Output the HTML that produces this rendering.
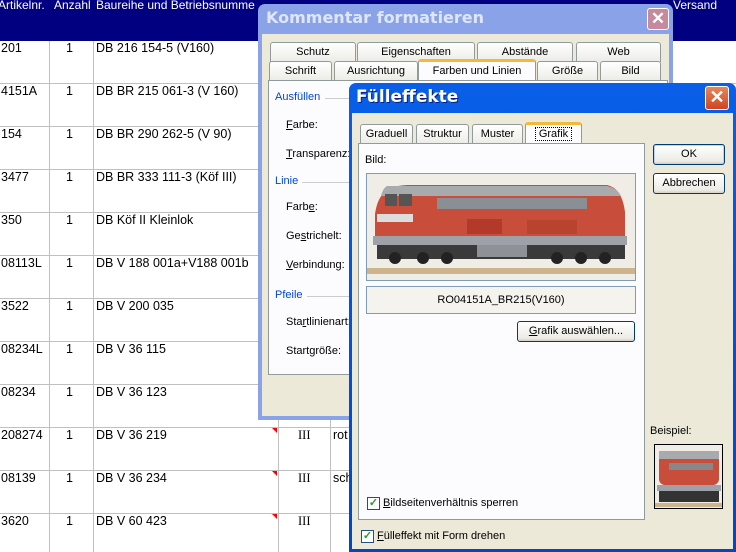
<!DOCTYPE html>
<html><head><meta charset="utf-8"><style>
*{margin:0;padding:0;box-sizing:border-box}
body{width:736px;height:552px;overflow:hidden;position:relative;background:#fff;font-family:"Liberation Sans",sans-serif;font-size:11px;color:#000}
.a{position:absolute;white-space:nowrap}
.hd{position:absolute;left:0;top:0;width:736px;height:41px;background:#000080;color:#fff;font-size:12px}
.hl{position:absolute;left:0;width:736px;height:1px;background:#c0c0c0}
.vl{position:absolute;top:41px;height:511px;width:1px;background:#c0c0c0}
.cell{position:absolute;font-size:12.5px;font-family:"Liberation Sans",sans-serif}
.tab{position:absolute;height:20px;border:1px solid #919b9c;border-bottom:none;border-radius:3px 3px 0 0;background:linear-gradient(#fff,#ecebe6);text-align:center;line-height:18px;font-size:11px}
.btn{position:absolute;border:1px solid #003c74;border-radius:3px;background:linear-gradient(#fff,#ecebe6 85%,#d6d0c5);text-align:center;font-size:11px}
.cb{position:absolute;width:13px;height:13px;border:1px solid #1c5180;background:#fff;color:#21a121;font-size:11px;line-height:11px;text-align:center;font-weight:bold}
</style></head><body>
<div class="hd">
<span class="a" style="left:-2px;top:-2px">Artikelnr.</span>
<span class="a" style="left:54px;top:-2px">Anzahl</span>
<span class="a" style="left:96px;top:-2px">Baureihe und Betriebsnumme</span>
<span class="a" style="left:673px;top:-2px">Versand</span>
</div>
<div class="hl" style="top:83px"></div><div class="hl" style="top:126px"></div><div class="hl" style="top:169px"></div><div class="hl" style="top:212px"></div><div class="hl" style="top:255px"></div><div class="hl" style="top:298px"></div><div class="hl" style="top:341px"></div><div class="hl" style="top:384px"></div><div class="hl" style="top:427px"></div><div class="hl" style="top:470px"></div><div class="hl" style="top:513px"></div>
<div class="vl" style="left:49px"></div><div class="vl" style="left:93px"></div><div class="vl" style="left:278px"></div><div class="vl" style="left:330px"></div>
<div class="cell" style="left:1px;top:41px">201</div><div class="cell" style="left:66px;top:41px">1</div><div class="cell" style="left:96px;top:41px">DB 216 154-5 (V160)</div>
<div class="cell" style="left:1px;top:84px">4151A</div><div class="cell" style="left:66px;top:84px">1</div><div class="cell" style="left:96px;top:84px">DB BR 215 061-3 (V 160)</div>
<div class="cell" style="left:1px;top:127px">154</div><div class="cell" style="left:66px;top:127px">1</div><div class="cell" style="left:96px;top:127px">DB BR 290 262-5 (V 90)</div>
<div class="cell" style="left:1px;top:170px">3477</div><div class="cell" style="left:66px;top:170px">1</div><div class="cell" style="left:96px;top:170px">DB BR 333 111-3 (Köf III)</div>
<div class="cell" style="left:1px;top:213px">350</div><div class="cell" style="left:66px;top:213px">1</div><div class="cell" style="left:96px;top:213px">DB Köf II Kleinlok</div>
<div class="cell" style="left:1px;top:256px">08113L</div><div class="cell" style="left:66px;top:256px">1</div><div class="cell" style="left:96px;top:256px">DB V 188 001a+V188 001b</div>
<div class="cell" style="left:1px;top:299px">3522</div><div class="cell" style="left:66px;top:299px">1</div><div class="cell" style="left:96px;top:299px">DB V 200 035</div>
<div class="cell" style="left:1px;top:342px">08234L</div><div class="cell" style="left:66px;top:342px">1</div><div class="cell" style="left:96px;top:342px">DB V 36 115</div>
<div class="cell" style="left:1px;top:385px">08234</div><div class="cell" style="left:66px;top:385px">1</div><div class="cell" style="left:96px;top:385px">DB V 36 123</div>
<div class="cell" style="left:1px;top:428px">208274</div><div class="cell" style="left:66px;top:428px">1</div><div class="cell" style="left:96px;top:428px">DB V 36 219</div><div class="cell" style="left:298px;top:428px;font-family:'Liberation Serif',serif">III</div><div class="cell" style="left:333px;top:428px">rot</div>
<div class="cell" style="left:1px;top:471px">08139</div><div class="cell" style="left:66px;top:471px">1</div><div class="cell" style="left:96px;top:471px">DB V 36 234</div><div class="cell" style="left:298px;top:471px;font-family:'Liberation Serif',serif">III</div><div class="cell" style="left:333px;top:471px">sch</div>
<div class="cell" style="left:1px;top:514px">3620</div><div class="cell" style="left:66px;top:514px">1</div><div class="cell" style="left:96px;top:514px">DB V 60 423</div><div class="cell" style="left:298px;top:514px;font-family:'Liberation Serif',serif">III</div>
<svg class="a" style="left:270px;top:427px" width="8" height="100"><polygon points="2,1 7,1 7,6" fill="red"/><polygon points="2,44 7,44 7,49" fill="red"/><polygon points="2,87 7,87 7,92" fill="red"/></svg>

<!-- Kommentar formatieren -->
<div class="a" style="left:258px;top:4px;width:415px;height:416px;background:#8aa3e8;border-radius:7px 7px 0 0">
 <div class="a" style="left:8px;top:4px;color:#dfe6fb;font-size:16px;font-weight:bold;font-family:'DejaVu Sans',sans-serif">Kommentar formatieren</div>
 <div class="a" style="left:389px;top:4px;width:22px;height:22px;border:1px solid #fff;border-radius:3px;background:#c58a9e;color:#fff;font-size:17px;line-height:19px;text-align:center;font-weight:bold">✕</div>
 <div class="a" style="left:4px;top:30px;width:407px;height:382px;background:#ece9d8"></div>
</div>
<div class="tab" style="left:270px;top:42px;width:86px">Schutz</div>
<div class="tab" style="left:357px;top:42px;width:118px">Eigenschaften</div>
<div class="tab" style="left:477px;top:42px;width:96px">Abstände</div>
<div class="tab" style="left:576px;top:42px;width:85px">Web</div>
<div class="tab" style="left:269px;top:61px;width:63px">Schrift</div>
<div class="tab" style="left:334px;top:61px;width:84px">Ausrichtung</div>
<div class="tab" style="left:418px;top:59px;width:118px;height:22px;background:#fcfcfe;border-top:3px solid #f5b83a">Farben und Linien</div>
<div class="tab" style="left:537px;top:61px;width:61px">Größe</div>
<div class="tab" style="left:600px;top:61px;width:61px">Bild</div>
<div class="a" style="left:268px;top:80px;width:400px;height:295px;border:1px solid #919b9c;background:#fcfcfe"></div>
<div class="a" style="left:275px;top:91px;color:#0046d5">Ausfüllen</div><div class="a" style="left:325px;top:98px;width:25px;height:1px;background:#ccc"></div>
<div class="a" style="left:286px;top:119px"><u>F</u>arbe:</div>
<div class="a" style="left:286px;top:148px"><u>T</u>ransparenz:</div>
<div class="a" style="left:275px;top:175px;color:#0046d5">Linie</div><div class="a" style="left:302px;top:182px;width:48px;height:1px;background:#ccc"></div>
<div class="a" style="left:286px;top:201px">Farb<u>e</u>:</div>
<div class="a" style="left:286px;top:230px">Ge<u>s</u>trichelt:</div>
<div class="a" style="left:286px;top:259px"><u>V</u>erbindung:</div>
<div class="a" style="left:275px;top:289px;color:#0046d5">Pfeile</div><div class="a" style="left:307px;top:296px;width:43px;height:1px;background:#ccc"></div>
<div class="a" style="left:286px;top:316px">Sta<u>r</u>tlinienart:</div>
<div class="a" style="left:286px;top:345px">Start<u>g</u>röße:</div>

<!-- Fülleffekte -->
<div class="a" style="left:349px;top:83px;width:387px;height:469px;background:linear-gradient(#0a5fe8,#0054e3 40%,#0047c8);border-radius:7px 7px 0 0">
 <div class="a" style="left:7px;top:4px;color:#fff;font-size:17px;font-weight:bold;font-family:'DejaVu Sans',sans-serif;text-shadow:1px 1px #0a1e7a">Fülleffekte</div>
 <div class="a" style="left:356px;top:3px;width:24px;height:24px;border:1px solid #fff;border-radius:3px;background:linear-gradient(#e8865e,#cc4620);color:#fff;font-size:18px;line-height:21px;text-align:center;font-weight:bold">✕</div>
 <div class="a" style="left:3px;top:30px;width:381px;height:436px;background:#ece9d8"></div>
</div>
<div class="tab" style="left:360px;top:124px;width:53px">Graduell</div>
<div class="tab" style="left:416px;top:124px;width:53px">Struktur</div>
<div class="tab" style="left:472px;top:124px;width:51px">Muster</div>
<div class="tab" style="left:525px;top:122px;width:57px;height:22px;background:#fcfcfe;border-top:3px solid #f5b83a"><span style="border:1px dotted #000;padding:0 3px">Grafik</span></div>
<div class="a" style="left:358px;top:143px;width:287px;height:377px;border:1px solid #919b9c;background:#fcfcfe"></div>
<div class="a" style="left:365px;top:154px">Bild:</div>
<div class="a" style="left:366px;top:173px;width:270px;height:108px;border:1px solid #7f9db9;background:#efece3;overflow:hidden">
<svg width="268" height="106" viewBox="0 0 268 106">
<rect x="0" y="0" width="268" height="106" fill="#f0ede6"/>
<rect x="0" y="94" width="268" height="6" fill="#cdb48c"/>
<path d="M16,20 Q20,12 40,11 L240,11 Q255,14 258,38 L258,62 L8,62 L8,40 Q10,26 16,20Z" fill="#c84d3a"/>
<path d="M20,12 L240,12 Q250,14 254,22 L14,22 Q16,14 20,12Z" fill="#a9aaad"/>
<rect x="18" y="20" width="12" height="12" fill="#555"/><rect x="32" y="20" width="13" height="12" fill="#555"/>
<rect x="70" y="24" width="150" height="11" fill="#8a8f96"/>
<rect x="10" y="40" width="36" height="8" fill="#ddd"/>
<rect x="100" y="45" width="35" height="15" fill="#b33a2a"/><rect x="160" y="46" width="50" height="14" fill="#b8432f"/>
<rect x="6" y="62" width="254" height="9" fill="#9ea2a8"/>
<rect x="10" y="71" width="248" height="14" fill="#3a3a3a"/>
<rect x="110" y="71" width="50" height="12" fill="#8e9297"/>
<circle cx="28" cy="84" r="6" fill="#222"/><circle cx="56" cy="84" r="6" fill="#222"/><circle cx="80" cy="84" r="6" fill="#222"/>
<circle cx="190" cy="84" r="6" fill="#222"/><circle cx="214" cy="84" r="6" fill="#222"/><circle cx="238" cy="84" r="6" fill="#222"/>
</svg></div>
<div class="a" style="left:366px;top:286px;width:270px;height:28px;border:1px solid #7f9db9;background:#f4f3ee;text-align:center;line-height:26px">RO04151A_BR215(V160)</div>
<div class="btn" style="left:517px;top:321px;width:118px;height:21px;line-height:19px"><u>G</u>rafik auswählen...</div>
<div class="cb" style="left:367px;top:497px">✓</div><div class="a" style="left:383px;top:497px"><u>B</u>ildseitenverhältnis sperren</div>
<div class="cb" style="left:361px;top:530px">✓</div><div class="a" style="left:377px;top:530px"><u>F</u>ülleffekt mit Form drehen</div>
<div class="btn" style="left:653px;top:144px;width:72px;height:21px;line-height:19px;border-color:#003c74;box-shadow:inset 0 0 0 1px #bcd4f6">OK</div>
<div class="btn" style="left:653px;top:173px;width:72px;height:21px;line-height:19px">Abbrechen</div>
<div class="a" style="left:650px;top:425px">Beispiel:</div>
<div class="a" style="left:654px;top:444px;width:69px;height:65px;border:1px solid #000;background:#f0ede6;overflow:hidden">
<svg width="67" height="63"><rect x="4" y="6" width="60" height="34" rx="6" fill="#c84d3a"/><rect x="4" y="6" width="60" height="8" fill="#a9aaad"/><rect x="14" y="18" width="44" height="7" fill="#888"/><rect x="2" y="40" width="64" height="6" fill="#9ea2a8"/><rect x="4" y="46" width="60" height="11" fill="#333"/><rect x="0" y="58" width="67" height="4" fill="#cdb48c"/></svg></div>
</body></html>
